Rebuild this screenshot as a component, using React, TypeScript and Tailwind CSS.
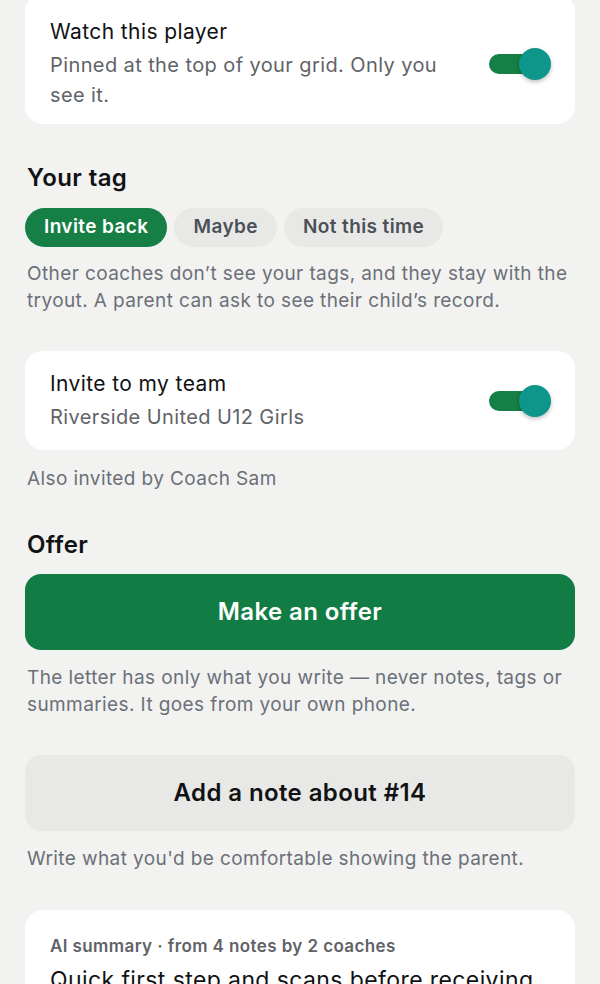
import React, { useState } from "react"

function Toggle({ on, onChange }: { on: boolean; onChange: () => void }) {
  return (
    <button
      onClick={onChange}
      className="relative w-[62px] h-[32px] shrink-0 flex items-center"
      aria-pressed={on}
    >
      <span
        className={`block w-[52px] h-[20px] rounded-full ${on ? "bg-[#157f45]" : "bg-[#c9cbc7]"}`}
      />
      <span
        className={`absolute top-0 w-[32px] h-[32px] rounded-full shadow-[0_2px_4px_rgba(0,0,0,0.25)] ${
          on ? "left-[30px] bg-[#0f968a]" : "left-0 bg-white"
        }`}
      />
    </button>
  )
}

const tags = ["Invite back", "Maybe", "Not this time"]

export default function App() {
  const [watch, setWatch] = useState(true)
  const [invite, setInvite] = useState(true)
  const [tag, setTag] = useState("Invite back")

  return (
    <div
      className="min-h-screen bg-[#f2f2f0] px-[25px] pb-10 overflow-hidden tracking-[0.025em]"
      style={{ fontFamily: "Inter, 'Noto Sans', sans-serif" }}
    >
      {/* Watch card */}
      <div className="-mt-[6px] bg-white rounded-[18px] pl-[25px] pr-[24px] pt-[24px] pb-[14px] flex items-center justify-between">
        <div className="max-w-[400px]">
          <div className="text-[21px] leading-[28px] text-[#111214]">Watch this player</div>
          <div className="mt-[4px] text-[20px] leading-[30px] text-[#5f6368]">
            Pinned at the top of your grid. Only you see it.
          </div>
        </div>
        <Toggle on={watch} onChange={() => setWatch(!watch)} />
      </div>

      {/* Tag */}
      <h2 className="mt-[38px] pl-[2px] text-[24px] leading-[32px] font-semibold text-[#111214]">Your tag</h2>
      <div className="mt-[14px] flex gap-[7px]">
        {tags.map((t) => (
          <button
            key={t}
            onClick={() => setTag(t)}
            className={`h-[39px] px-[19px] rounded-full text-[19px] font-semibold ${
              tag === t ? "bg-[#157f45] text-white" : "bg-[#e8e9e6] text-[#4b5058]"
            }`}
          >
            {t}
          </button>
        ))}
      </div>
      <p className="mt-[13px] pl-[2px] text-[19px] leading-[27px] text-[#6b7079]">
        Other coaches don’t see your tags, and they stay with the tryout. A parent can ask to see their child’s record.
      </p>

      {/* Invite card */}
      <div className="mt-[37px] bg-white rounded-[18px] pl-[25px] pr-[24px] py-[18px] flex items-center justify-between">
        <div>
          <div className="text-[21px] leading-[30px] text-[#111214]">Invite to my team</div>
          <div className="mt-[3px] text-[20px] leading-[30px] text-[#5f6368]">Riverside United U12 Girls</div>
        </div>
        <Toggle on={invite} onChange={() => setInvite(!invite)} />
      </div>
      <p className="mt-[15px] pl-[2px] text-[19px] leading-[27px] text-[#6b7079]">Also invited by Coach Sam</p>

      {/* Offer */}
      <h2 className="mt-[37px] pl-[2px] text-[24px] leading-[32px] font-semibold text-[#111214]">Offer</h2>
      <button className="mt-[13px] w-full h-[76px] rounded-[16px] bg-[#117d45] text-white text-[24px] font-semibold">
        Make an offer
      </button>
      <p className="mt-[14px] pl-[2px] text-[19px] leading-[27px] text-[#6b7079]">
        The letter has only what you write — never notes, tags or summaries. It goes from your own phone.
      </p>

      <button className="mt-[37px] w-full h-[76px] rounded-[16px] bg-[#e8e9e6] text-[#111214] text-[24px] font-semibold">
        Add a note about #14
      </button>
      <p className="mt-[14px] pl-[2px] text-[19px] leading-[27px] text-[#6b7079]">
        Write what you'd be comfortable showing the parent.
      </p>

      {/* AI summary */}
      <div className="mt-[38px] bg-white rounded-[18px] px-[25px] pt-[24px] pb-6">
        <div className="text-[17px] leading-[24px] font-semibold text-[#5f6368]">
          AI summary · from 4 notes by 2 coaches
        </div>
        <p className="mt-[6px] text-[23px] leading-[32px] text-[#111214]">
          Quick first step and scans before receiving the ball. Communicates well with teammates.
        </p>
      </div>
    </div>
  )
}
